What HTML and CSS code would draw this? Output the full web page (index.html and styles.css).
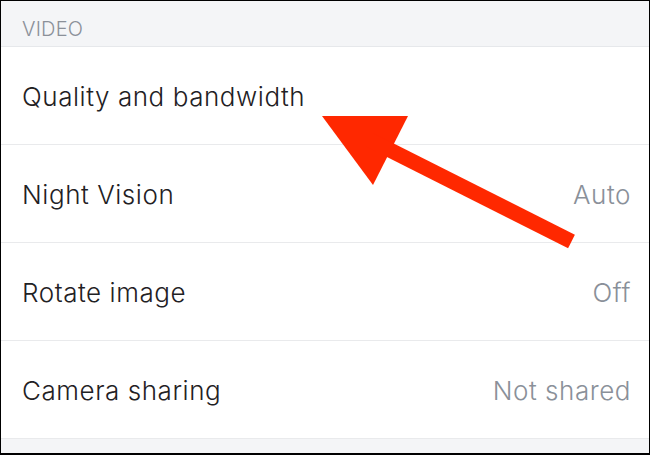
FILE: index.html
```html
<!DOCTYPE html>
<html>
<head>
<meta charset="utf-8">
<link rel="stylesheet" href="styles.css">
</head>
<body>
<div class="frame">
  <div class="section-header">VIDEO</div>
  <div class="row"><span class="label">Quality and bandwidth</span></div>
  <div class="row"><span class="label">Night Vision</span><span class="value">Auto</span></div>
  <div class="row"><span class="label">Rotate image</span><span class="value">Off</span></div>
  <div class="row"><span class="label">Camera sharing</span><span class="value">Not shared</span></div>
  <div class="footer"></div>
  <svg class="arrow" width="650" height="455" viewBox="0 0 650 455">
    <polygon points="322,116 408,116 373,185" fill="#ff2800"/>
    <polygon points="373.4,133.3 574.9,234.8 568.1,248.2 366.6,146.7" fill="#ff2800"/>
  </svg>
</div>
</body>
</html>
```
FILE: styles.css
```css
html, body {
  margin: 0;
  padding: 0;
}
body {
  width: 650px;
  height: 455px;
  overflow: hidden;
  font-family: Inter, "Open Sans", sans-serif;
}
.frame {
  position: relative;
  box-sizing: border-box;
  width: 650px;
  height: 455px;
  border-left: 1px solid #000;
  border-top: 1px solid #000;
  border-right: 1px solid #000;
  border-bottom: 2px solid #000;
  background: #fff;
  display: flex;
  flex-direction: column;
}
.section-header {
  height: 46px;
  background: #f4f5f7;
  border-bottom: 1px solid #e6e8eb;
  color: #8b9099;
  font-size: 20px;
  font-weight: 300;
  letter-spacing: 0.2px;
  padding-left: 21px;
  padding-top: 10px;
  display: flex;
  align-items: center;
  box-sizing: border-box;
}
.row {
  height: 98px;
  box-sizing: border-box;
  border-bottom: 1px solid #e9eaec;
  display: flex;
  align-items: center;
  justify-content: space-between;
  padding: 2px 18px 0 21px;
  font-size: 26px;
  font-weight: 300;
  letter-spacing: 0.55px;
}
.label {
  color: #1f2124;
}
.value {
  color: #8a9099;
}
.footer {
  flex: 1;
  background: #f4f5f7;
}
.arrow {
  position: absolute;
  left: -1px;
  top: -1px;
}
```
